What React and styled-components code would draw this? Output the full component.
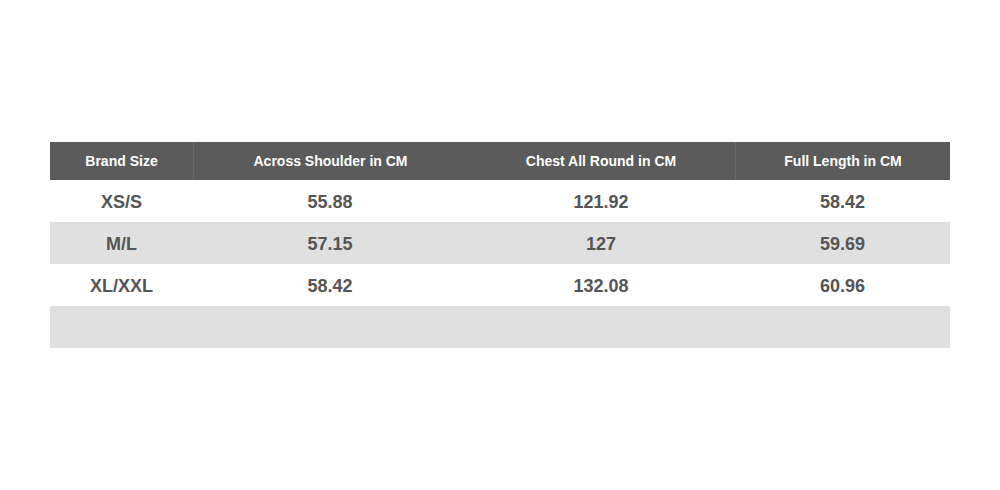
import React from "react"
import styled, { createGlobalStyle } from "styled-components"

const Global = createGlobalStyle`
  body {
    margin: 0;
    background: #fff;
    font-family: "Liberation Sans", Arial, sans-serif;
  }
`

const Page = styled.div`
  width: 1000px;
  height: 490px;
  padding: 142px 50px 0;
  box-sizing: border-box;
`

const Table = styled.div`
  display: grid;
  grid-template-columns: 143px 274px 268px 215px;
  width: 900px;
`

const Head = styled.div`
  height: 38px;
  display: flex;
  align-items: center;
  justify-content: center;
  background: #5b5b5b;
  color: #fff;
  font-size: 14px;
  font-weight: bold;
  border-left: ${p => (p.$divider ? "1px solid #6a6a6a" : "none")};
`

const Cell = styled.div`
  height: 42px;
  box-sizing: border-box;
  padding-top: 3px;
  display: flex;
  align-items: center;
  justify-content: center;
  background: ${p => (p.$striped ? "#e0e0e0" : "#fff")};
  color: #555;
  font-size: 18px;
  font-weight: bold;
`

const columns = [
  { label: "Brand Size", divider: false },
  { label: "Across Shoulder in CM", divider: true },
  { label: "Chest All Round in CM", divider: false },
  { label: "Full Length in CM", divider: true },
]

const rows = [
  ["XS/S", "55.88", "121.92", "58.42"],
  ["M/L", "57.15", "127", "59.69"],
  ["XL/XXL", "58.42", "132.08", "60.96"],
  ["", "", "", ""],
]

export default function App() {
  return (
    <>
      <Global />
      <Page>
        <Table>
          {columns.map(col => (
            <Head key={col.label} $divider={col.divider}>
              {col.label}
            </Head>
          ))}
          {rows.map((row, idx) =>
            row.map((value, i) => (
              <Cell key={`${idx}-${i}`} $striped={idx % 2 === 1}>
                {value}
              </Cell>
            ))
          )}
        </Table>
      </Page>
    </>
  )
}
